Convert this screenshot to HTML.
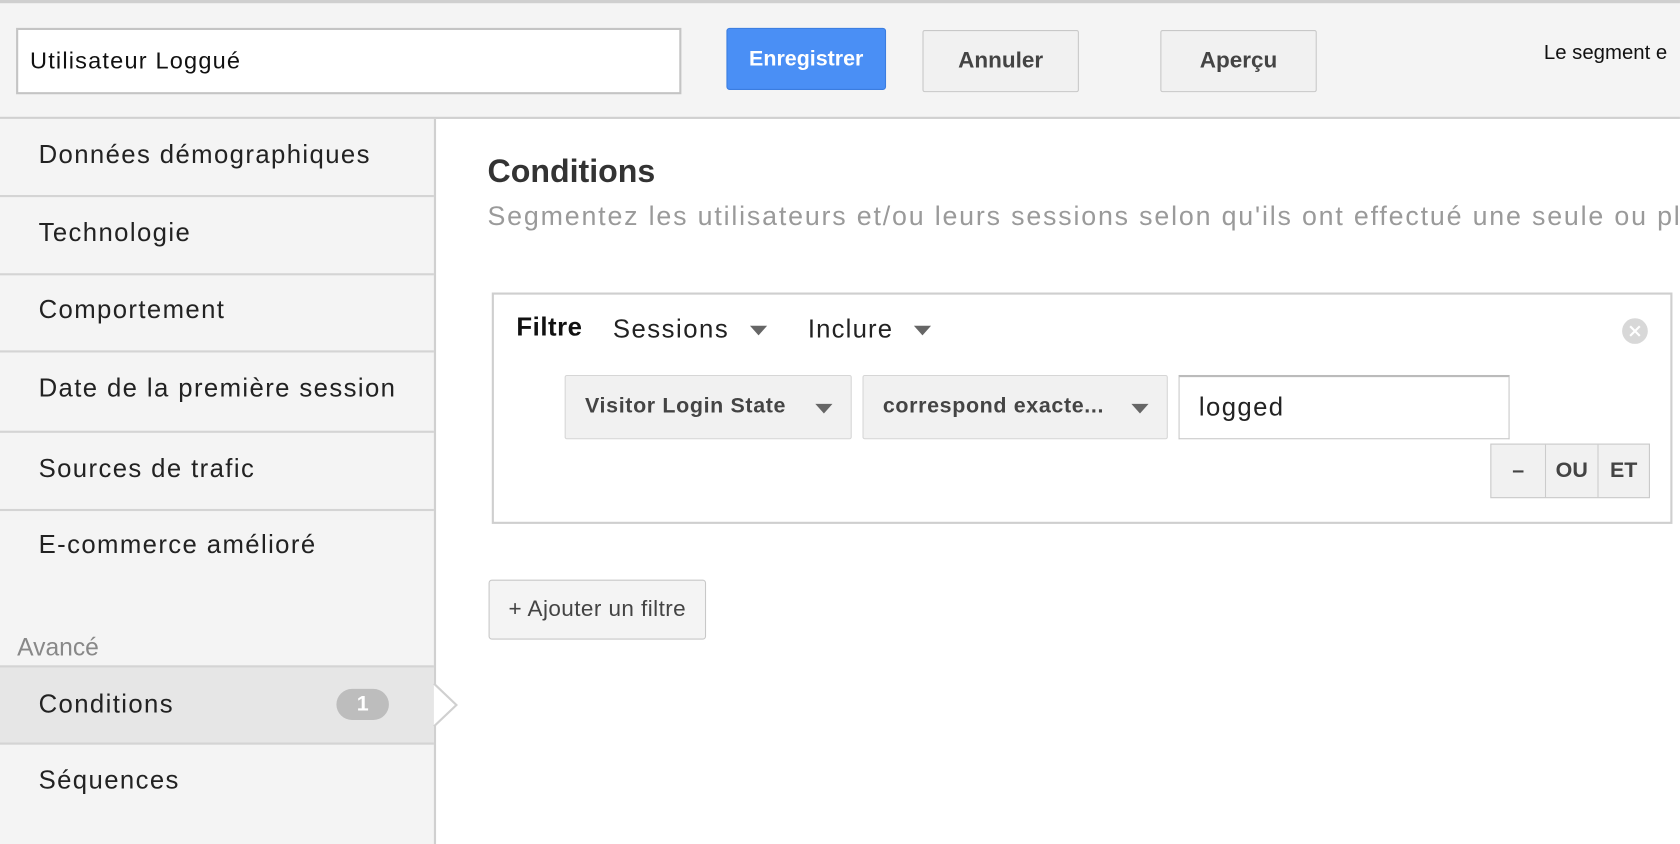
<!DOCTYPE html>
<html><head><meta charset="utf-8"><style>
html,body{margin:0;padding:0;width:1680px;height:844px;overflow:hidden;background:#fff;font-family:"Liberation Sans",Arial,sans-serif}
#w{position:absolute;left:0;top:0;width:1568px;height:788px;transform:scale(1.0714);transform-origin:0 0;background:#fff}
.a{position:absolute;box-sizing:border-box}
.hdr{left:0;top:0;width:1568px;height:111px;background:#f4f4f4;border-top:3px solid #cfcfcf;border-bottom:2px solid #d0d0d0}
.btn{border:1px solid #c8c8c8;background:#f1f1f1;border-radius:2px;color:#444;font-weight:bold;font-size:21px;text-align:center}
.side{left:0;top:111px;width:407px;height:677px;background:#f4f4f4;border-right:2px solid #d0d0d0}
.it{left:0;width:405px;font-size:24px;color:#222;padding-left:36px;border-bottom:2px solid #d4d4d4;letter-spacing:1.3px}
.tri{display:inline-block;width:0;height:0;border-left:8px solid transparent;border-right:8px solid transparent;border-top:9px solid #666;vertical-align:middle}
.dd{background:#f1f1f1;border:1px solid #d6d6d6;border-radius:2px;font-weight:bold;font-size:20px;color:#444;padding-left:18px;line-height:57px;letter-spacing:0.6px}
</style></head><body><div id="w">
<div class="a hdr"></div>
<div class="a" style="left:15px;top:26px;width:621px;height:62px;background:#fff;border:2px solid #c4c4c4;font-size:22px;line-height:58px;padding-left:11px;color:#111;letter-spacing:1.1px">Utilisateur Loggué</div>
<div class="a" style="left:678px;top:26px;width:149px;height:58px;background:#4a8ff5;border:1px solid #3b7de0;border-radius:3px;color:#fff;font-weight:bold;font-size:20px;text-align:center;line-height:56px">Enregistrer</div>
<div class="a btn" style="left:861px;top:28px;width:146px;height:58px;line-height:56px">Annuler</div>
<div class="a btn" style="left:1083px;top:28px;width:146px;height:58px;line-height:56px">Aperçu</div>
<div class="a" style="left:1441px;top:39px;font-size:19px;color:#111;white-space:nowrap">Le segment e</div>

<div class="a side"></div>
<div class="a it" style="top:111px;height:73px;line-height:68px">Données démographiques</div>
<div class="a it" style="top:184px;height:73px;line-height:68px">Technologie</div>
<div class="a it" style="top:257px;height:72px;line-height:66px">Comportement</div>
<div class="a it" style="top:329px;height:75px;line-height:68px">Date de la première session</div>
<div class="a it" style="top:404px;height:73px;line-height:68px">Sources de trafic</div>
<div class="a" style="left:36px;top:495px;font-size:24px;color:#222;letter-spacing:1.3px">E-commerce amélioré</div>
<div class="a" style="left:16px;top:591px;font-size:23px;color:#888">Avancé</div>
<div class="a it" style="top:621px;height:74px;line-height:70px;background:#e6e6e6;border-top:2px solid #d4d4d4">Conditions</div>
<div class="a" style="left:314px;top:643px;width:49px;height:29px;border-radius:15px;background:#bdbdbd;color:#fff;font-weight:bold;font-size:20px;text-align:center;line-height:29px">1</div>
<svg class="a" style="left:404px;top:638px" width="24" height="40"><path d="M1 0 L22 20 L1 40" fill="#fff" stroke="#d0d0d0" stroke-width="2"/></svg>
<div class="a" style="left:36px;top:715px;font-size:24px;color:#222;letter-spacing:1.3px">Séquences</div>

<div class="a" style="left:455px;top:144px;font-size:30px;font-weight:bold;color:#333">Conditions</div>
<div class="a" style="left:455px;top:188px;font-size:25px;color:#9a9a9a;white-space:nowrap;letter-spacing:1.7px">Segmentez les utilisateurs et/ou leurs sessions selon qu'ils ont effectué une seule ou pl</div>

<div class="a" style="left:459px;top:273px;width:1102px;height:216px;border:2px solid #cfcfcf"></div>
<div class="a" style="left:482px;top:292px;font-size:24px;font-weight:bold;color:#111;letter-spacing:0.5px">Filtre</div>
<div class="a" style="left:572px;top:294px;font-size:24px;color:#222;letter-spacing:1.4px">Sessions</div>
<div class="a tri" style="left:700px;top:304px"></div>
<div class="a" style="left:754px;top:294px;font-size:24px;color:#222;letter-spacing:1.1px">Inclure</div>
<div class="a tri" style="left:853px;top:304px"></div>
<svg class="a" style="left:1513px;top:296px" width="26" height="26"><circle cx="13" cy="13" r="12" fill="#d8d8d8"/><path d="M8.5 8.5L17.5 17.5M17.5 8.5L8.5 17.5" stroke="#fff" stroke-width="2"/></svg>

<div class="a dd" style="left:527px;top:350px;width:268px;height:60px">Visitor Login State</div>
<div class="a tri" style="left:761px;top:377px"></div>
<div class="a dd" style="left:805px;top:350px;width:285px;height:60px">correspond exacte...</div>
<div class="a tri" style="left:1056px;top:377px"></div>
<div class="a" style="left:1100px;top:350px;width:309px;height:60px;border:1px solid #c8c8c8;border-top:2px solid #bbb;font-size:24px;line-height:58px;padding-left:18px;color:#222;letter-spacing:1.3px">logged</div>

<div class="a" style="left:1391px;top:414px;width:149px;height:51px;border:1px solid #c8c8c8;background:#f1f1f1;display:flex;font-weight:bold;font-size:20px;color:#444">
<div style="width:50px;border-right:1px solid #ccc;text-align:center;line-height:49px">–</div>
<div style="width:48px;border-right:1px solid #ccc;text-align:center;line-height:49px">OU</div>
<div style="flex:1;text-align:center;line-height:49px">ET</div></div>

<div class="a" style="left:456px;top:541px;width:203px;height:56px;border:1px solid #c8c8c8;border-radius:3px;background:#f4f4f4;font-size:21px;color:#444;line-height:54px;text-align:center;letter-spacing:0.4px">+ Ajouter un filtre</div>
</div></body></html>
